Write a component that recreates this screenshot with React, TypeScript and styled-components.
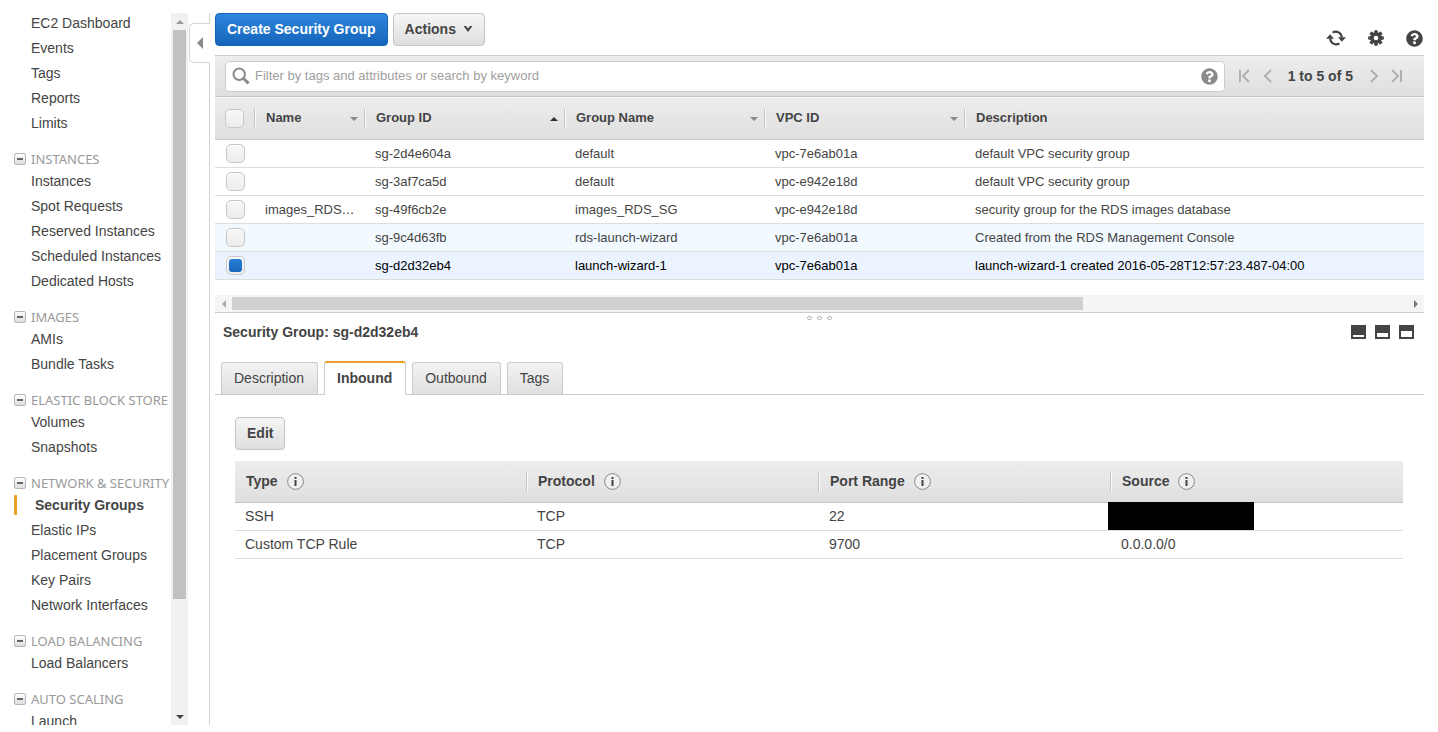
import React from "react";
import styled, { createGlobalStyle, css } from "styled-components";
import { FaQuestionCircle } from "react-icons/fa";

const color = {
  text: "#444",
  muted: "#999",
  line: "#ccc",
  rowLine: "#ddd",
  accent: "#eb9f28",
};

const barFill = "linear-gradient(#ededed, #dfdfdf)";

const GlobalStyle = createGlobalStyle`
  *, *::before, *::after { box-sizing: border-box; }
  body { margin: 0; background: #fff; color: ${color.text}; font: 14px/20px "Liberation Sans", Arial, sans-serif; }
  button, input { font: inherit; color: inherit; }
  button { padding: 0; border: 0; background: none; cursor: pointer; }
  svg { display: block; flex: none; }
`;

const Page = styled.div`
  display: flex;
  height: 100vh;
  overflow: hidden;
  padding: 13px 14px 7px 0;
`;

/* Side navigation */

const Sidebar = styled.aside`
  display: flex;
  flex: none;
  width: 188px;
`;

const Nav = styled.nav`
  flex: 1;
  min-width: 0;
  overflow: hidden;
  white-space: nowrap;
`;

const NavList = styled.ul`
  display: flex;
  flex-direction: column;
  gap: 5px;
  margin: 0;
  padding: 0 0 0 14px;
  list-style: none;
`;

const NavLink = styled.a<{ $active?: boolean }>`
  display: block;
  padding-left: 17px;
  line-height: 20px;
  color: ${color.text};
  text-decoration: none;
  ${(p) =>
    p.$active &&
    css`
      padding-left: 18px;
      border-left: 3px solid ${color.accent};
      border-radius: 1px;
      font-weight: bold;
    `}
`;

const SectionToggle = styled.button`
  display: flex;
  align-items: center;
  gap: 5px;
  margin: 16px 0 2px 14px;
  color: ${color.muted};
  font: 13px/20px "Noto Sans", Verdana, sans-serif;
`;

const MinusBox = styled.span`
  display: flex;
  align-items: center;
  justify-content: center;
  width: 12px;
  height: 12px;
  border: 1px solid #b5b5b5;
  border-radius: 2px;
  background: linear-gradient(#fff, #ddd);
  &::before {
    content: "";
    width: 6px;
    height: 2px;
    background: #666;
  }
`;

const ScrollBar = styled.div<{ $horizontal?: boolean }>`
  display: flex;
  flex: none;
  flex-direction: ${(p) => (p.$horizontal ? "row" : "column")};
  ${(p) => (p.$horizontal ? "height: 17px; padding: 2px 0;" : "width: 17px; padding: 0 2px;")}
  background: ${(p) => (p.$horizontal ? "#f5f5f5" : "#f1f1f1")};
`;

const ScrollArrow = styled.span`
  display: flex;
  flex: 0 0 17px;
  align-items: center;
  justify-content: center;
`;

const ScrollPart = styled.span<{ $grow: number; $fill?: string }>`
  flex: ${(p) => p.$grow} 1 0;
  background: ${(p) => p.$fill ?? "transparent"};
`;

const Gutter = styled.div`
  display: flex;
  flex: none;
  flex-direction: column;
  width: 20px;
  margin: 0 5px 0 2px;
`;

const GutterLine = styled.span<{ $fill?: boolean }>`
  flex: ${(p) => (p.$fill ? "1" : "0 0 10px")};
  border-right: 1px solid #d5d5d5;
`;

const CollapseTab = styled.button`
  display: flex;
  flex: 0 0 40px;
  align-items: center;
  justify-content: center;
  margin-left: -1px;
  border: 1px solid #d5d5d5;
  border-right: 0;
  border-radius: 5px 0 0 5px;
`;

/* Main column */

const Main = styled.main`
  flex: 1;
  min-width: 0;
`;

const Toolbar = styled.div`
  display: flex;
  align-items: flex-start;
  gap: 5px;
  height: 42px;
`;

const Button = styled.button<{ $primary?: boolean }>`
  display: flex;
  align-items: center;
  gap: 7px;
  height: 33px;
  padding: 0 11px 2px;
  border: 1px solid ${(p) => (p.$primary ? "#1467bd" : "#c4c4c4")};
  border-radius: 4px;
  background: ${(p) =>
    p.$primary ? "linear-gradient(#2f86dc, #1464ba)" : "linear-gradient(#f6f6f6, #dfdfdf)"};
  color: ${(p) => (p.$primary ? "#fff" : color.text)};
  font-weight: bold;
`;

const ToolIcons = styled.div`
  display: flex;
  gap: 22px;
  margin: 15px 1px 0 auto;
  color: ${color.text};
`;

const IconButton = styled.button`
  display: flex;
  align-items: center;
  justify-content: center;
  height: 20px;
`;

const FilterBar = styled.div`
  display: flex;
  align-items: center;
  height: 42px;
  padding: 0 22px 0 10px;
  border-top: 1px solid ${color.line};
  border-bottom: 1px solid #c4c4c4;
  background: ${barFill};
`;

const SearchBox = styled.label`
  display: flex;
  flex: 1;
  align-items: center;
  gap: 5px;
  height: 31px;
  padding: 0 6px;
  border: 1px solid ${color.line};
  border-radius: 4px;
  background: #fff;
  color: #8b8b8b;
`;

const SearchInput = styled.input`
  flex: 1;
  min-width: 0;
  padding: 0;
  border: 0;
  outline: 0;
  background: none;
  font-size: 13px;
  &::placeholder {
    color: #a0a0a0;
    opacity: 1;
  }
`;

const Pager = styled.div`
  display: flex;
  align-items: center;
  gap: 12px;
  margin-left: 14px;
  color: #b0b0b0;
`;

const PagerText = styled.span`
  margin: 0 5px 0 4px;
  color: ${color.text};
  font-weight: bold;
  white-space: nowrap;
`;

const Table = styled.table`
  width: 100%;
  border-collapse: separate;
  border-spacing: 0;
  table-layout: fixed;
`;

const GroupTable = styled(Table)`
  font-size: 13px;
`;

const Th = styled.th`
  height: 42px;
  padding: 0;
  border-bottom: 1px solid #c4c4c4;
  background: ${barFill};
  text-align: left;
  ${GroupTable} & {
    height: 43px;
    border-top: 1px solid #f8f8f8;
  }
`;

const ThInner = styled.div<{ $first?: boolean; $last?: boolean; $spread?: boolean }>`
  display: flex;
  align-items: center;
  justify-content: ${(p) => (p.$spread ? "space-between" : "flex-start")};
  gap: 9px;
  height: 20px;
  padding: 0 6px 0 10px;
  border-left: 1px solid ${(p) => (p.$first ? "transparent" : "#fafafa")};
  border-right: 1px solid ${(p) => (p.$last ? "transparent" : "#c4c4c4")};
`;

const ThLabel = styled.span`
  height: 20px;
  line-height: 18px;
`;

const SelectAll = styled.div`
  display: flex;
  align-items: center;
  height: 20px;
  padding-left: 10px;
  border-right: 1px solid #c4c4c4;
`;

const Tr = styled.tr<{ $state?: "hover" | "selected" }>`
  background: ${(p) =>
    p.$state === "selected" ? "#eaf3fe" : p.$state === "hover" ? "#f2f9ff" : "#fff"};
  color: ${(p) => (p.$state === "selected" ? "#000" : "inherit")};
`;

const Td = styled.td`
  height: 28px;
  padding: 0 10px;
  border-bottom: 1px solid ${color.rowLine};
  overflow: hidden;
  text-overflow: ellipsis;
  white-space: nowrap;
`;

const RuleTd = styled(Td)`
  padding: 0 10px 2px;
  overflow: visible;
`;

const CheckCell = styled(Td)`
  padding: 0 0 0 11px;
`;

const Checkbox = styled.input`
  display: block;
  appearance: none;
  width: 19px;
  height: 19px;
  margin: 0;
  padding: 2px;
  border: 1px solid #c8c8c8;
  border-radius: 5px;
  background: linear-gradient(#f8f8f8, #ececec);
  &:checked::before {
    content: "";
    display: block;
    height: 13px;
    border-radius: 3px;
    background: linear-gradient(#2a7fd4, #1567bb);
  }
`;

const ScrollRegion = styled.div`
  padding-top: 15px;
  border-bottom: 1px solid ${color.line};
`;

const Splitter = styled.div`
  display: flex;
  justify-content: center;
  gap: 5px;
  height: 9px;
  padding-top: 3px;
`;

const Grip = styled.span`
  width: 5px;
  height: 4px;
  border: 1px solid #bbb;
  border-radius: 2px;
`;

const DetailHeader = styled.div`
  display: flex;
  align-items: center;
  justify-content: space-between;
  height: 20px;
  padding: 0 10px 0 8px;
`;

const DetailTitle = styled.h2`
  margin: 0;
  font-size: 14px;
  line-height: 20px;
`;

const PaneButtons = styled.div`
  display: flex;
  gap: 9px;
`;

const PaneButton = styled.button<{ $open: number }>`
  display: flex;
  align-items: flex-end;
  width: 15px;
  height: 14px;
  padding: 2px;
  background: ${color.text};
  &::before {
    content: "";
    flex: 1;
    height: ${(p) => p.$open}px;
    background: #fff;
  }
`;

const TabBar = styled.div`
  display: flex;
  align-items: flex-end;
  gap: 6px;
  height: 53px;
  padding-left: 6px;
  border-bottom: 1px solid ${color.line};
`;

const Tab = styled.button<{ $active?: boolean }>`
  height: 32px;
  padding: 0 13px 2px 12px;
  border: 1px solid ${color.line};
  border-bottom: 0;
  border-radius: 3px 3px 0 0;
  background: linear-gradient(#f3f3f3, #dfdfdf);
  ${(p) =>
    p.$active &&
    css`
      height: 34px;
      margin-bottom: -1px;
      border-top: 2px solid ${color.accent};
      background: #fff;
      font-weight: bold;
    `}
`;

const TabPanel = styled.section`
  display: flex;
  flex-direction: column;
  align-items: flex-start;
  gap: 11px;
  padding: 22px 21px 0 20px;
`;

const Redacted = styled.div`
  width: 146px;
  height: 28px;
  margin: -1px 0 -2px -13px;
  background: #000;
`;

/* Icons */

const trianglePoints = {
  up: "0,6 8,6 4,2",
  down: "0,2 8,2 4,6",
  left: "6,0 6,8 2,4",
  right: "2,0 2,8 6,4",
};

const Triangle = ({ dir, size = 8, fill = "#777" }: { dir: keyof typeof trianglePoints; size?: number; fill?: string }) => (
  <svg width={size} height={size} viewBox="0 0 8 8" aria-hidden="true">
    <polygon points={trianglePoints[dir]} fill={fill} />
  </svg>
);

const RefreshIcon = () => (
  <svg width="20" height="16" viewBox="0 0 20 16" fill="none" aria-hidden="true">
    <path d="M4.2 8.5A6 6 0 0 0 13.4 13.4M15.8 7.5A6 6 0 0 0 6.6 2.6" stroke="currentColor" strokeWidth="2.2" />
    <path d="M0 8.8L4.2 4.2L8 8.8ZM12 7.2L15.8 11.8L20 7.2Z" fill="currentColor" />
  </svg>
);

const GearIcon = () => (
  <svg width="16" height="16" viewBox="0 0 16 16" aria-hidden="true">
    <g fill="currentColor">
      {[0, 45, 90, 135].map((a) => (
        <rect key={a} x="6.2" y="0.2" width="3.6" height="15.6" rx="0.8" transform={`rotate(${a} 8 8)`} />
      ))}
      <circle cx="8" cy="8" r="5.8" />
    </g>
    <circle cx="8" cy="8" r="2.3" fill="#fff" />
  </svg>
);

const SearchIcon = () => (
  <svg width="18" height="18" viewBox="0 0 18 18" fill="none" stroke="currentColor" aria-hidden="true">
    <circle cx="7.2" cy="7.2" r="5.7" strokeWidth="2" />
    <path d="M11.5 11.5L16.6 16.4" strokeWidth="3" />
  </svg>
);

const ChevronIcon = () => (
  <svg width="10" height="8" viewBox="0 0 10 8" aria-hidden="true">
    <path d="M0.5 1H3L5 3.6L7 1H9.5L5 7Z" fill="#444" />
  </svg>
);

const PagerIcon = ({ d, width = 8 }: { d: string; width?: number }) => (
  <svg width={width} height="14" viewBox={`0 0 ${width} 14`} fill="none" stroke="currentColor" strokeWidth="2" aria-hidden="true">
    <path d={d} />
  </svg>
);

const InfoIcon = () => (
  <svg width="17" height="17" viewBox="0 0 17 17" aria-hidden="true">
    <circle cx="8.5" cy="8.5" r="7.9" fill="#f0f0f0" stroke="#888" />
    <path d="M7.5 4h2v2h-2zM7.5 7h2v6h-2z" fill="#444" />
  </svg>
);

/* Data */

const sections: { title?: string; items: string[] }[] = [
  { items: ["EC2 Dashboard", "Events", "Tags", "Reports", "Limits"] },
  {
    title: "INSTANCES",
    items: ["Instances", "Spot Requests", "Reserved Instances", "Scheduled Instances", "Dedicated Hosts"],
  },
  { title: "IMAGES", items: ["AMIs", "Bundle Tasks"] },
  { title: "ELASTIC BLOCK STORE", items: ["Volumes", "Snapshots"] },
  {
    title: "NETWORK & SECURITY",
    items: ["Security Groups", "Elastic IPs", "Placement Groups", "Key Pairs", "Network Interfaces"],
  },
  { title: "LOAD BALANCING", items: ["Load Balancers"] },
  { title: "AUTO SCALING", items: ["Launch"] },
];

const columns: { label: string; sort?: "up" | "down" }[] = [
  { label: "Name", sort: "down" },
  { label: "Group ID", sort: "up" },
  { label: "Group Name", sort: "down" },
  { label: "VPC ID", sort: "down" },
  { label: "Description" },
];

const groups: { cells: string[]; state?: "hover" | "selected" }[] = [
  { cells: ["", "sg-2d4e604a", "default", "vpc-7e6ab01a", "default VPC security group"] },
  { cells: ["", "sg-3af7ca5d", "default", "vpc-e942e18d", "default VPC security group"] },
  { cells: ["images_RDS_SG", "sg-49f6cb2e", "images_RDS_SG", "vpc-e942e18d", "security group for the RDS images database"] },
  { cells: ["", "sg-9c4d63fb", "rds-launch-wizard", "vpc-7e6ab01a", "Created from the RDS Management Console"], state: "hover" },
  {
    cells: ["", "sg-d2d32eb4", "launch-wizard-1", "vpc-7e6ab01a", "launch-wizard-1 created 2016-05-28T12:57:23.487-04:00"],
    state: "selected",
  },
];

const ruleColumns = ["Type", "Protocol", "Port Range", "Source"];
const rules = [
  { type: "SSH", protocol: "TCP", port: "22", source: null },
  { type: "Custom TCP Rule", protocol: "TCP", port: "9700", source: "0.0.0.0/0" },
];

export default function App() {
  return (
    <>
      <GlobalStyle />
      <Page>
        <Sidebar>
          <Nav aria-label="EC2">
            {sections.map((section) => (
              <React.Fragment key={section.title ?? "top"}>
                {section.title && (
                  <SectionToggle aria-expanded="true">
                    <MinusBox />
                    {section.title}
                  </SectionToggle>
                )}
                <NavList>
                  {section.items.map((item) => (
                    <li key={item}>
                      <NavLink href="#" $active={item === "Security Groups"}>
                        {item}
                      </NavLink>
                    </li>
                  ))}
                </NavList>
              </React.Fragment>
            ))}
          </Nav>
          <ScrollBar aria-hidden="true">
            <ScrollArrow><Triangle dir="up" fill="#999" /></ScrollArrow>
            <ScrollPart $grow={569} $fill="#c1c1c1" />
            <ScrollPart $grow={109} />
            <ScrollArrow><Triangle dir="down" fill="#444" /></ScrollArrow>
          </ScrollBar>
        </Sidebar>
        <Gutter>
          <GutterLine />
          <CollapseTab aria-label="Collapse navigation">
            <Triangle dir="left" size={12} fill="#888" />
          </CollapseTab>
          <GutterLine $fill />
        </Gutter>

        <Main>
          <Toolbar>
            <Button $primary>Create Security Group</Button>
            <Button>
              Actions
              <ChevronIcon />
            </Button>
            <ToolIcons>
              <IconButton aria-label="Refresh"><RefreshIcon /></IconButton>
              <IconButton aria-label="Settings"><GearIcon /></IconButton>
              <IconButton aria-label="Help"><FaQuestionCircle size={17} /></IconButton>
            </ToolIcons>
          </Toolbar>

          <FilterBar>
            <SearchBox>
              <SearchIcon />
              <SearchInput
                type="text"
                aria-label="Filter security groups"
                placeholder="Filter by tags and attributes or search by keyword"
              />
              <IconButton aria-label="Search help"><FaQuestionCircle size={17} color="#8b8b8b" /></IconButton>
            </SearchBox>
            <Pager>
              <IconButton aria-label="First page"><PagerIcon width={13} d="M1 1V13M10 1L4 7L10 13" /></IconButton>
              <IconButton aria-label="Previous page"><PagerIcon d="M7 1L1 7L7 13" /></IconButton>
              <PagerText>1 to 5 of 5</PagerText>
              <IconButton aria-label="Next page"><PagerIcon d="M1 1L7 7L1 13" /></IconButton>
              <IconButton aria-label="Last page"><PagerIcon width={12} d="M2 1L8 7L2 13M11 1V13" /></IconButton>
            </Pager>
          </FilterBar>

          <GroupTable>
            <colgroup>
              <col width="40" />
              <col width="110" />
              <col width="200" />
              <col width="200" />
              <col width="200" />
              <col />
            </colgroup>
            <thead>
              <tr>
                <Th>
                  <SelectAll><Checkbox type="checkbox" aria-label="Select all" /></SelectAll>
                </Th>
                {columns.map((c) => (
                  <Th key={c.label} scope="col">
                    <ThInner $spread $last={!c.sort}>
                      <ThLabel>{c.label}</ThLabel>
                      {c.sort && <Triangle dir={c.sort} fill={c.sort === "up" ? "#333" : "#888"} />}
                    </ThInner>
                  </Th>
                ))}
              </tr>
            </thead>
            <tbody>
              {groups.map((g) => (
                <Tr key={g.cells[1]} $state={g.state}>
                  <CheckCell>
                    <Checkbox type="checkbox" aria-label={g.cells[1]} defaultChecked={g.state === "selected"} />
                  </CheckCell>
                  {g.cells.map((cell, i) => (
                    <Td key={i}>{cell}</Td>
                  ))}
                </Tr>
              ))}
            </tbody>
          </GroupTable>
          <ScrollRegion>
            <ScrollBar $horizontal aria-hidden="true">
              <ScrollArrow><Triangle dir="left" fill="#aaa" /></ScrollArrow>
              <ScrollPart $grow={851} $fill="#d1d1d1" />
              <ScrollPart $grow={324} />
              <ScrollArrow><Triangle dir="right" /></ScrollArrow>
            </ScrollBar>
          </ScrollRegion>
          <Splitter>
            <Grip />
            <Grip />
            <Grip />
          </Splitter>

          <DetailHeader>
            <DetailTitle>Security Group: sg-d2d32eb4</DetailTitle>
            <PaneButtons>
              <PaneButton aria-label="Small pane" $open={2} />
              <PaneButton aria-label="Half pane" $open={4} />
              <PaneButton aria-label="Full pane" $open={6} />
            </PaneButtons>
          </DetailHeader>
          <TabBar role="tablist">
            {["Description", "Inbound", "Outbound", "Tags"].map((t) => (
              <Tab key={t} role="tab" aria-selected={t === "Inbound"} $active={t === "Inbound"}>
                {t}
              </Tab>
            ))}
          </TabBar>
          <TabPanel role="tabpanel">
            <Button>Edit</Button>
            <Table>
              <thead>
                <tr>
                  {ruleColumns.map((label, i) => (
                    <Th key={label} scope="col">
                      <ThInner $first={i === 0} $last={i === ruleColumns.length - 1}>
                        <ThLabel>{label}</ThLabel>
                        <InfoIcon />
                      </ThInner>
                    </Th>
                  ))}
                </tr>
              </thead>
              <tbody>
                {rules.map((r) => (
                  <Tr key={r.type}>
                    <RuleTd>{r.type}</RuleTd>
                    <RuleTd>{r.protocol}</RuleTd>
                    <RuleTd>{r.port}</RuleTd>
                    <RuleTd>{r.source ?? <Redacted />}</RuleTd>
                  </Tr>
                ))}
              </tbody>
            </Table>
          </TabPanel>
        </Main>
      </Page>
    </>
  );
}
